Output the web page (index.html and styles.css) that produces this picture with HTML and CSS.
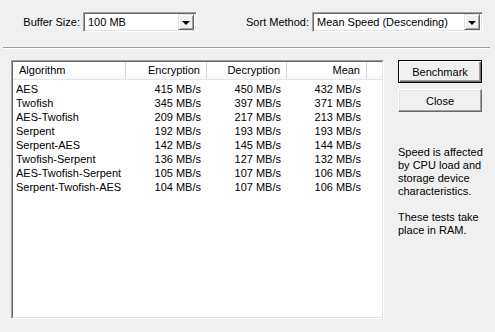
FILE: index.html
```html
<!DOCTYPE html>
<html>
<head>
<meta charset="utf-8">
<link rel="stylesheet" href="styles.css">
</head>
<body>
<div class="dlg">
  <div class="top">
    <span class="lbl lbl1">Buffer Size:</span>
    <div class="combo combo1"><span class="val">100 MB</span><span class="drop"><i class="arrow"></i></span></div>
    <span class="lbl lbl2">Sort Method:</span>
    <div class="combo combo2"><span class="val">Mean Speed (Descending)</span><span class="drop"><i class="arrow"></i></span></div>
  </div>
  <div class="sep"></div>
  <div class="main">
    <div class="list">
      <div class="inner">
        <div class="hdr">
          <div class="c c1">Algorithm</div>
          <div class="c c2">Encryption</div>
          <div class="c c3">Decryption</div>
          <div class="c c4">Mean</div>
          <div class="c c5"></div>
        </div>
        <div class="rows">
          <div class="row"><div class="c c1">AES</div><div class="c c2">415 MB/s</div><div class="c c3">450 MB/s</div><div class="c c4">432 MB/s</div></div>
          <div class="row"><div class="c c1">Twofish</div><div class="c c2">345 MB/s</div><div class="c c3">397 MB/s</div><div class="c c4">371 MB/s</div></div>
          <div class="row"><div class="c c1">AES-Twofish</div><div class="c c2">209 MB/s</div><div class="c c3">217 MB/s</div><div class="c c4">213 MB/s</div></div>
          <div class="row"><div class="c c1">Serpent</div><div class="c c2">192 MB/s</div><div class="c c3">193 MB/s</div><div class="c c4">193 MB/s</div></div>
          <div class="row"><div class="c c1">Serpent-AES</div><div class="c c2">142 MB/s</div><div class="c c3">145 MB/s</div><div class="c c4">144 MB/s</div></div>
          <div class="row"><div class="c c1">Twofish-Serpent</div><div class="c c2">136 MB/s</div><div class="c c3">127 MB/s</div><div class="c c4">132 MB/s</div></div>
          <div class="row"><div class="c c1">AES-Twofish-Serpent</div><div class="c c2">105 MB/s</div><div class="c c3">107 MB/s</div><div class="c c4">106 MB/s</div></div>
          <div class="row"><div class="c c1">Serpent-Twofish-AES</div><div class="c c2">104 MB/s</div><div class="c c3">107 MB/s</div><div class="c c4">106 MB/s</div></div>
        </div>
      </div>
    </div>
    <div class="side">
      <div class="btn btn-default"><span>Benchmark</span></div>
      <div class="btn"><span>Close</span></div>
      <p class="info">Speed is affected<br>by CPU load and<br>storage device<br>characteristics.</p>
      <p class="info">These tests take<br>place in RAM.</p>
    </div>
  </div>
</div>
</body>
</html>
```
FILE: styles.css
```css
html, body {
  margin: 0;
  padding: 0;
  background: #f0f0f0;
}
.dlg {
  width: 495px;
  height: 332px;
  font-family: "Liberation Sans", Arial, sans-serif;
  font-size: 11px;
  color: #000;
  background: #f0f0f0;
}
.top {
  display: flex;
  align-items: center;
  padding-top: 12px;
  height: 20px;
}
.lbl {
  text-align: right;
  margin-right: 3px;
}
.lbl1 { width: 80px; }
.lbl2 { width: 112px; }
.combo {
  box-sizing: border-box;
  height: 20px;
  background: #fff;
  border-top: 1px solid #a0a0a0;
  border-left: 1px solid #a0a0a0;
  border-right: 1px solid #fff;
  border-bottom: 1px solid #fff;
  box-shadow: inset 1px 1px 0 #696969, inset -1px -1px 0 #e3e3e3;
  display: flex;
  align-items: center;
  padding: 2px 2px 2px 4px;
}
.combo1 { width: 114px; }
.combo2 { width: 171px; }
.val {
  flex: 1;
  white-space: nowrap;
  overflow: hidden;
}
.drop {
  box-sizing: border-box;
  width: 16px;
  height: 16px;
  background: #f0f0f0;
  border-top: 1px solid #e3e3e3;
  border-left: 1px solid #e3e3e3;
  border-right: 1px solid #696969;
  border-bottom: 1px solid #696969;
  box-shadow: inset 1px 1px 0 #fff, inset -1px -1px 0 #a0a0a0;
  display: flex;
  align-items: center;
  justify-content: center;
}
.arrow {
  width: 0;
  height: 0;
  border-left: 4px solid transparent;
  border-right: 4px solid transparent;
  border-top: 4px solid #000;
  margin-top: 1px;
}
.sep {
  margin: 15px 5px 0 3px;
  height: 0;
  border-top: 1px solid #a0a0a0;
  border-bottom: 1px solid #fff;
}
.main {
  display: flex;
  align-items: flex-start;
  padding: 11px 0 0 11px;
}
.list {
  box-sizing: border-box;
  width: 373px;
  height: 259px;
  border-top: 1px solid #a0a0a0;
  border-left: 1px solid #a0a0a0;
  border-right: 1px solid #fff;
  border-bottom: 1px solid #fff;
  background: #fff;
}
.inner {
  box-sizing: border-box;
  height: 100%;
  border-top: 1px solid #696969;
  border-left: 1px solid #696969;
  border-right: 1px solid #e3e3e3;
  border-bottom: 1px solid #e3e3e3;
  background: #fff;
  overflow: hidden;
}
.hdr {
  display: flex;
  height: 17px;
  border-bottom: 1px solid #e5e5e5;
  background: linear-gradient(#ffffff, #ffffff 50%, #f7f8fa);
}
.hdr .c {
  box-sizing: border-box;
  border-right: 1px solid #d5d5d5;
  line-height: 17px;
  padding: 0 6px;
  white-space: nowrap;
}
.hdr .c5 { flex: 1; border-right: none; }
.c1 { width: 113px; }
.c2 { width: 81px; }
.c3 { width: 80px; }
.c4 { width: 80px; }
.c2, .c3, .c4 { text-align: right; }
.rows {
  padding-top: 2px;
}
.row {
  display: flex;
  height: 14px;
  line-height: 14px;
}
.row .c {
  box-sizing: border-box;
  white-space: nowrap;
  padding: 0 6px 0 3px;
}
.side {
  margin-left: 14px;
  width: 84px;
  display: flex;
  flex-direction: column;
}
.btn {
  box-sizing: border-box;
  width: 84px;
  height: 23px;
  background: #f0f0f0;
  border-top: 1px solid #fff;
  border-left: 1px solid #fff;
  border-right: 1px solid #696969;
  border-bottom: 1px solid #696969;
  box-shadow: inset -1px -1px 0 #a0a0a0, inset 1px 1px 0 #e3e3e3;
  display: flex;
  align-items: center;
  justify-content: center;
  margin-bottom: 6px;
}
.btn-default {
  border: 1px solid #000;
  box-shadow: inset 1px 1px 0 #fff, inset -1px -1px 0 #696969, inset -2px -2px 0 #a0a0a0;
}
.info {
  margin: 0;
  line-height: 13px;
  width: 84px;
  white-space: nowrap;
}
.info:first-of-type {
  margin-top: 28px;
}
.info + .info {
  margin-top: 13px;
}
```
